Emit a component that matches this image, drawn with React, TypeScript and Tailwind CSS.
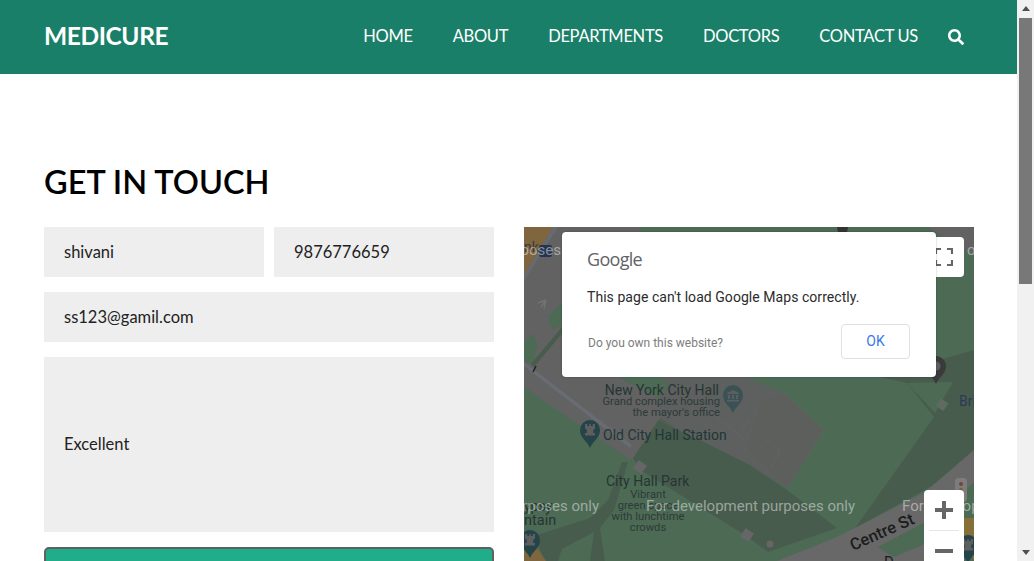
import { FaSearch } from "react-icons/fa";

const sans = "font-['Lato','Open_Sans',sans-serif]";

function Pin({ x, y, color = "#24444a", kind = "rail" }: { x: number; y: number; color?: string; kind?: "rail" | "museum" | "ring" }) {
  return (
    <g transform={`translate(${x} ${y})`}>
      <path d="M0 15C-3 8-10 5-10-3A10 10 0 1 1 10-3C10 5 3 8 0 15Z" fill={color} />
      {kind === "rail" && (
        <path d="M-5-9h2.2v2h2v-2h1.6v2h2v-2H5v4.5L3.2-3v3H5v2.4H-5V0h1.8v-3L-5-4.5Z" fill="#5e5e5e" />
      )}
      {kind === "museum" && (
        <path d="M0-8 6-5v1H-6v-1ZM-5-3h2v4h-2ZM-1-3h2v4h-2ZM3-3h2v4H3ZM-6 2H6v1.6H-6Z" fill="#5e5e5e" />
      )}
      {kind === "ring" && <circle cx="0" cy="-3" r="4.5" fill="#5e5e5e" />}
    </g>
  );
}

function MapArt() {
  const label = "font-['Roboto',sans-serif]";
  return (
    <svg viewBox="524 227 450 334" className="block h-full w-full">
      <rect x="524" y="227" width="450" height="334" fill="#4d6a55" />
      {/* plaza on the left */}
      <path d="M553 227H640V377H618L662 400 660 418 633 458 630 460 524 387V275Z" fill="#626262" />
      <path d="M524 227H553L524 275Z" fill="#80663e" />
      <path d="M553 227H558L524 281V275Z" fill="#676b70" />
      <path d="M548 316 562 303V325L552 330Z" fill="#4d6a55" />
      <path d="M524 342 533 334 538 345 533 365 524 360Z" fill="#4d6a55" />
      <path d="M531 364 562 327 565 330 534 367Z" fill="#485c4e" />
      <path d="M524 362 632 445 630 448 524 366Z" fill="#686d73" />
      <path d="M533 372 536 366" stroke="#222" strokeWidth="1.5" />
      <path d="M546 300 541 307 M546 300 544 309 M546 300 538 303" stroke="#727272" strokeWidth="1.5" fill="none" />
      {/* dark park lawn and paths */}
      <path d="M633 458 660 418 680 430 750 465 787 490 837 528 768 552 745 535 640 470Z" fill="#485c4e" />
      <path d="M622 462 628 462 614 510 600 528 605 561H590L594 532 562 549 558 561H545L538 545 534 536 590 518 608 500Z" fill="#485c4e" />
      {/* city hall */}
      <path d="M660 377H745L784 393 824 430 787 488 750 465 680 430 660 418Z" fill="#5d605e" />
      <path d="M620 377H660L670 384 660 395Z" fill="#4d6a55" />
      <path d="M760 400 784 393 824 430 787 488 745 450Z" fill="#5c5f5c" stroke="#656565" strokeWidth="0.6" />
      <path d="M650 415 700 440 M690 395 745 440 M765 440 780 450 770 470 M740 430 750 420" stroke="#666" strokeWidth="0.7" fill="none" />
      <rect x="635" y="462" width="10" height="10" transform="rotate(35 640 467)" fill="#666" />
      <rect x="742" y="530" width="10" height="10" transform="rotate(35 747 535)" fill="#666" />
      <circle cx="770" cy="544" r="3.5" fill="#666" />
      {/* right hand band */}
      <path d="M880 377 974 350V458L925 490 855 528 934 417 907 383Z" fill="#485c4e" />
      <path d="M907 383 953 382 935 413Z" fill="#4d6a55" />
      <path d="M927 227H974V255Z" fill="#626262" />
      <rect x="938" y="400" width="9" height="9" transform="rotate(35 942 404)" fill="#5f6b62" />
      {/* Centre St */}
      <path d="M777 561 830 540 855 528 925 492 974 450V482L925 528 878 547 900 561Z" fill="#686868" />
      <path d="M878 547 925 522 925 561H900Z" fill="#4d6a55" />
      <path d="M884 561 925 544V561Z" fill="#686868" />
      <path d="M964 518H974V561L964 540Z" fill="#86703a" />
      <path d="M524 550 537 548 546 561H524Z" fill="#80663e" />
      <rect x="955" y="478" width="12" height="24" rx="4" fill="#7d7d7d" />
      <circle cx="961" cy="484" r="2" fill="#7e4038" />
      <circle cx="961" cy="490" r="2" fill="#6e6233" />
      <path d="M837 227H848L847 232H838Z" fill="#333" />

      <Pin x={733} y={398} kind="museum" color="#3a5256" />
      <Pin x={590} y={433} />
      <Pin x={530} y={543} />
      <Pin x={968} y={548} />
      <Pin x={936} y={369} color="#3a3a3a" kind="ring" />

      <g className={label} fill="#1d2b2a">
        <text x="719" y="395" fontSize="14" textAnchor="end" fill="#263533">New York City Hall</text>
        <text x="720" y="405" fontSize="11.2" textAnchor="end" fill="#2e3a38">Grand complex housing</text>
        <text x="720" y="416" fontSize="11.2" textAnchor="end" fill="#2e3a38">the mayor's office</text>
        <text x="603" y="440" fontSize="14" fill="#1f3735">Old City Hall Station</text>
        <text x="606" y="486" fontSize="14" fill="#263533">City Hall Park</text>
        <g fontSize="11.2" textAnchor="middle" fill="#2e3a38">
          <text x="648" y="498">Vibrant</text>
          <text x="648" y="509">green space</text>
          <text x="648" y="520">with lunchtime</text>
          <text x="648" y="531">crowds</text>
        </g>
        <text x="524" y="525" fontSize="14.5" fill="#263533">ntain</text>
        <text x="959" y="406" fontSize="14" fill="#2c3b54">Bri</text>
        <text x="524" y="511" fontSize="14" fill="#263533">ypsy</text>
        <text x="524" y="252" fontSize="14" fill="#3a3a3a">nk</text>
        <rect x="539" y="245" width="13" height="12" rx="2" fill="#24344f" />
        <text x="0" y="0" fontSize="16.5" fontWeight="500" transform="translate(853 551) rotate(-24)" fill="#1c1c1c">Centre St</text>
        <text x="884" y="567" fontSize="15" fill="#1c1c1c">D</text>
      </g>
      <g className={label} fontSize="15" fill="#ffffff" fillOpacity="0.45">
        <text x="599" y="511" textAnchor="end">purposes only</text>
        <text x="646" y="511">For development purposes only</text>
        <text x="902" y="511">For development</text>
        <text x="561" y="255" textAnchor="end">purposes</text>
        <text x="967" y="255">o</text>
      </g>
    </svg>
  );
}

export default function App() {
  const nav = ["HOME", "ABOUT", "DEPARTMENTS", "DOCTORS", "CONTACT US"];
  return (
    <div className={`flex h-[561px] w-[1034px] overflow-hidden bg-white ${sans}`}>
      <div className="h-[561px] w-[1017px] overflow-hidden">
        <header className="flex h-[74px] items-center justify-between bg-[#1a7f68] pb-[2px] pl-[44px] pr-[53px] text-white">
          <a className="text-[24.5px] font-bold tracking-[-0.4px]">MEDICURE</a>
          <nav className="flex items-center gap-10 text-[16.5px] tracking-[-0.3px]">
            {nav.map((n) => (
              <a key={n}>{n}</a>
            ))}
            <FaSearch className="-ml-2.5 mt-[2px] h-[16px] w-[16px]" />
          </nav>
        </header>
        <main className="pl-[44px] pr-[43px] pt-[87px]">
          <h2 className="mb-[24px] text-[32.5px] font-semibold leading-[42px] text-black">GET IN TOUCH</h2>
          <div className="flex gap-[30px]">
            <form className="flex w-[450px] flex-col gap-[15px] text-[16.5px] text-[#222]">
              <div className="flex gap-[10px]">
                <div className="flex h-[50px] w-[220px] items-center bg-[#eeeeee] px-5">shivani</div>
                <div className="flex h-[50px] w-[220px] items-center bg-[#eeeeee] px-5">9876776659</div>
              </div>
              <div className="flex h-[50px] items-center bg-[#eeeeee] px-5">ss123@gamil.com</div>
              <div className="flex h-[175px] items-center bg-[#eeeeee] px-5">Excellent</div>
              <button type="button" className="h-[50px] rounded-[5px] border-2 border-[#5f6060] bg-[#1fad8a]" />
            </form>
            <div className="relative h-[334px] w-[450px] overflow-hidden bg-[#4d6a55]">
              <MapArt />
              {/* fullscreen */}
              <div className="absolute left-[370px] top-[10px] flex h-[40px] w-[70px] items-center justify-end rounded-sm bg-white pr-[11px]">
                <svg width="18" height="18" viewBox="0 0 18 18" fill="none" stroke="#666" strokeWidth="2.2">
                  <path d="M1 6V1H6M12 1H17V6M17 12V17H12M6 17H1V12" />
                </svg>
              </div>
              {/* zoom */}
              <div className="absolute left-[400px] top-[263px] flex h-[100px] w-[40px] flex-col items-center rounded-sm bg-white">
                <svg width="18" height="18" viewBox="0 0 18 18" className="mt-[11px]" fill="#666">
                  <path d="M7 0h4v7h7v4h-7v7H7v-7H0V7h7Z" />
                </svg>
                <div className="mt-[11px] h-px w-[30px] bg-[#e6e6e6]" />
                <svg width="18" height="18" viewBox="0 0 18 18" className="mt-[11px]" fill="#666">
                  <path d="M0 7h18v4H0Z" />
                </svg>
              </div>
              {/* dialog */}
              <div className="absolute left-[38px] top-[5px] h-[145px] w-[374px] rounded-[4px] bg-white font-['Roboto',sans-serif] shadow-[0_0_2px_rgba(0,0,0,0.3)]">
                <div className="absolute left-[25px] top-[15px] font-['Open_Sans',sans-serif] text-[18px] leading-6 tracking-[-0.7px] text-[#5f6368]">Google</div>
                <p className="absolute left-[25px] top-[55px] text-[14px] leading-5 tracking-[0.05px] text-[#2b2b2b]">This page can't load Google Maps correctly.</p>
                <p className="absolute left-[26px] top-[103px] text-[12px] leading-4 text-[#7d7d7d]">Do you own this website?</p>
                <div className="absolute left-[279px] top-[92px] flex h-[35px] w-[69px] items-center justify-center rounded-[4px] border border-[#e0e0e0] text-[14px] text-[#3b78e7]">OK</div>
              </div>
            </div>
          </div>
        </main>
      </div>
      <aside className="relative flex h-[561px] w-[17px] flex-col items-center bg-[#f1f1f1]">
        <div className="mt-[6px] h-0 w-0 border-x-[4px] border-b-[5px] border-x-transparent border-b-[#505050]" />
        <div className="mt-[7px] h-[266px] w-[13px] bg-[#787878]" />
        <div className="mb-[6px] mt-auto h-0 w-0 border-x-[4px] border-t-[5px] border-x-transparent border-t-[#505050]" />
      </aside>
    </div>
  );
}
